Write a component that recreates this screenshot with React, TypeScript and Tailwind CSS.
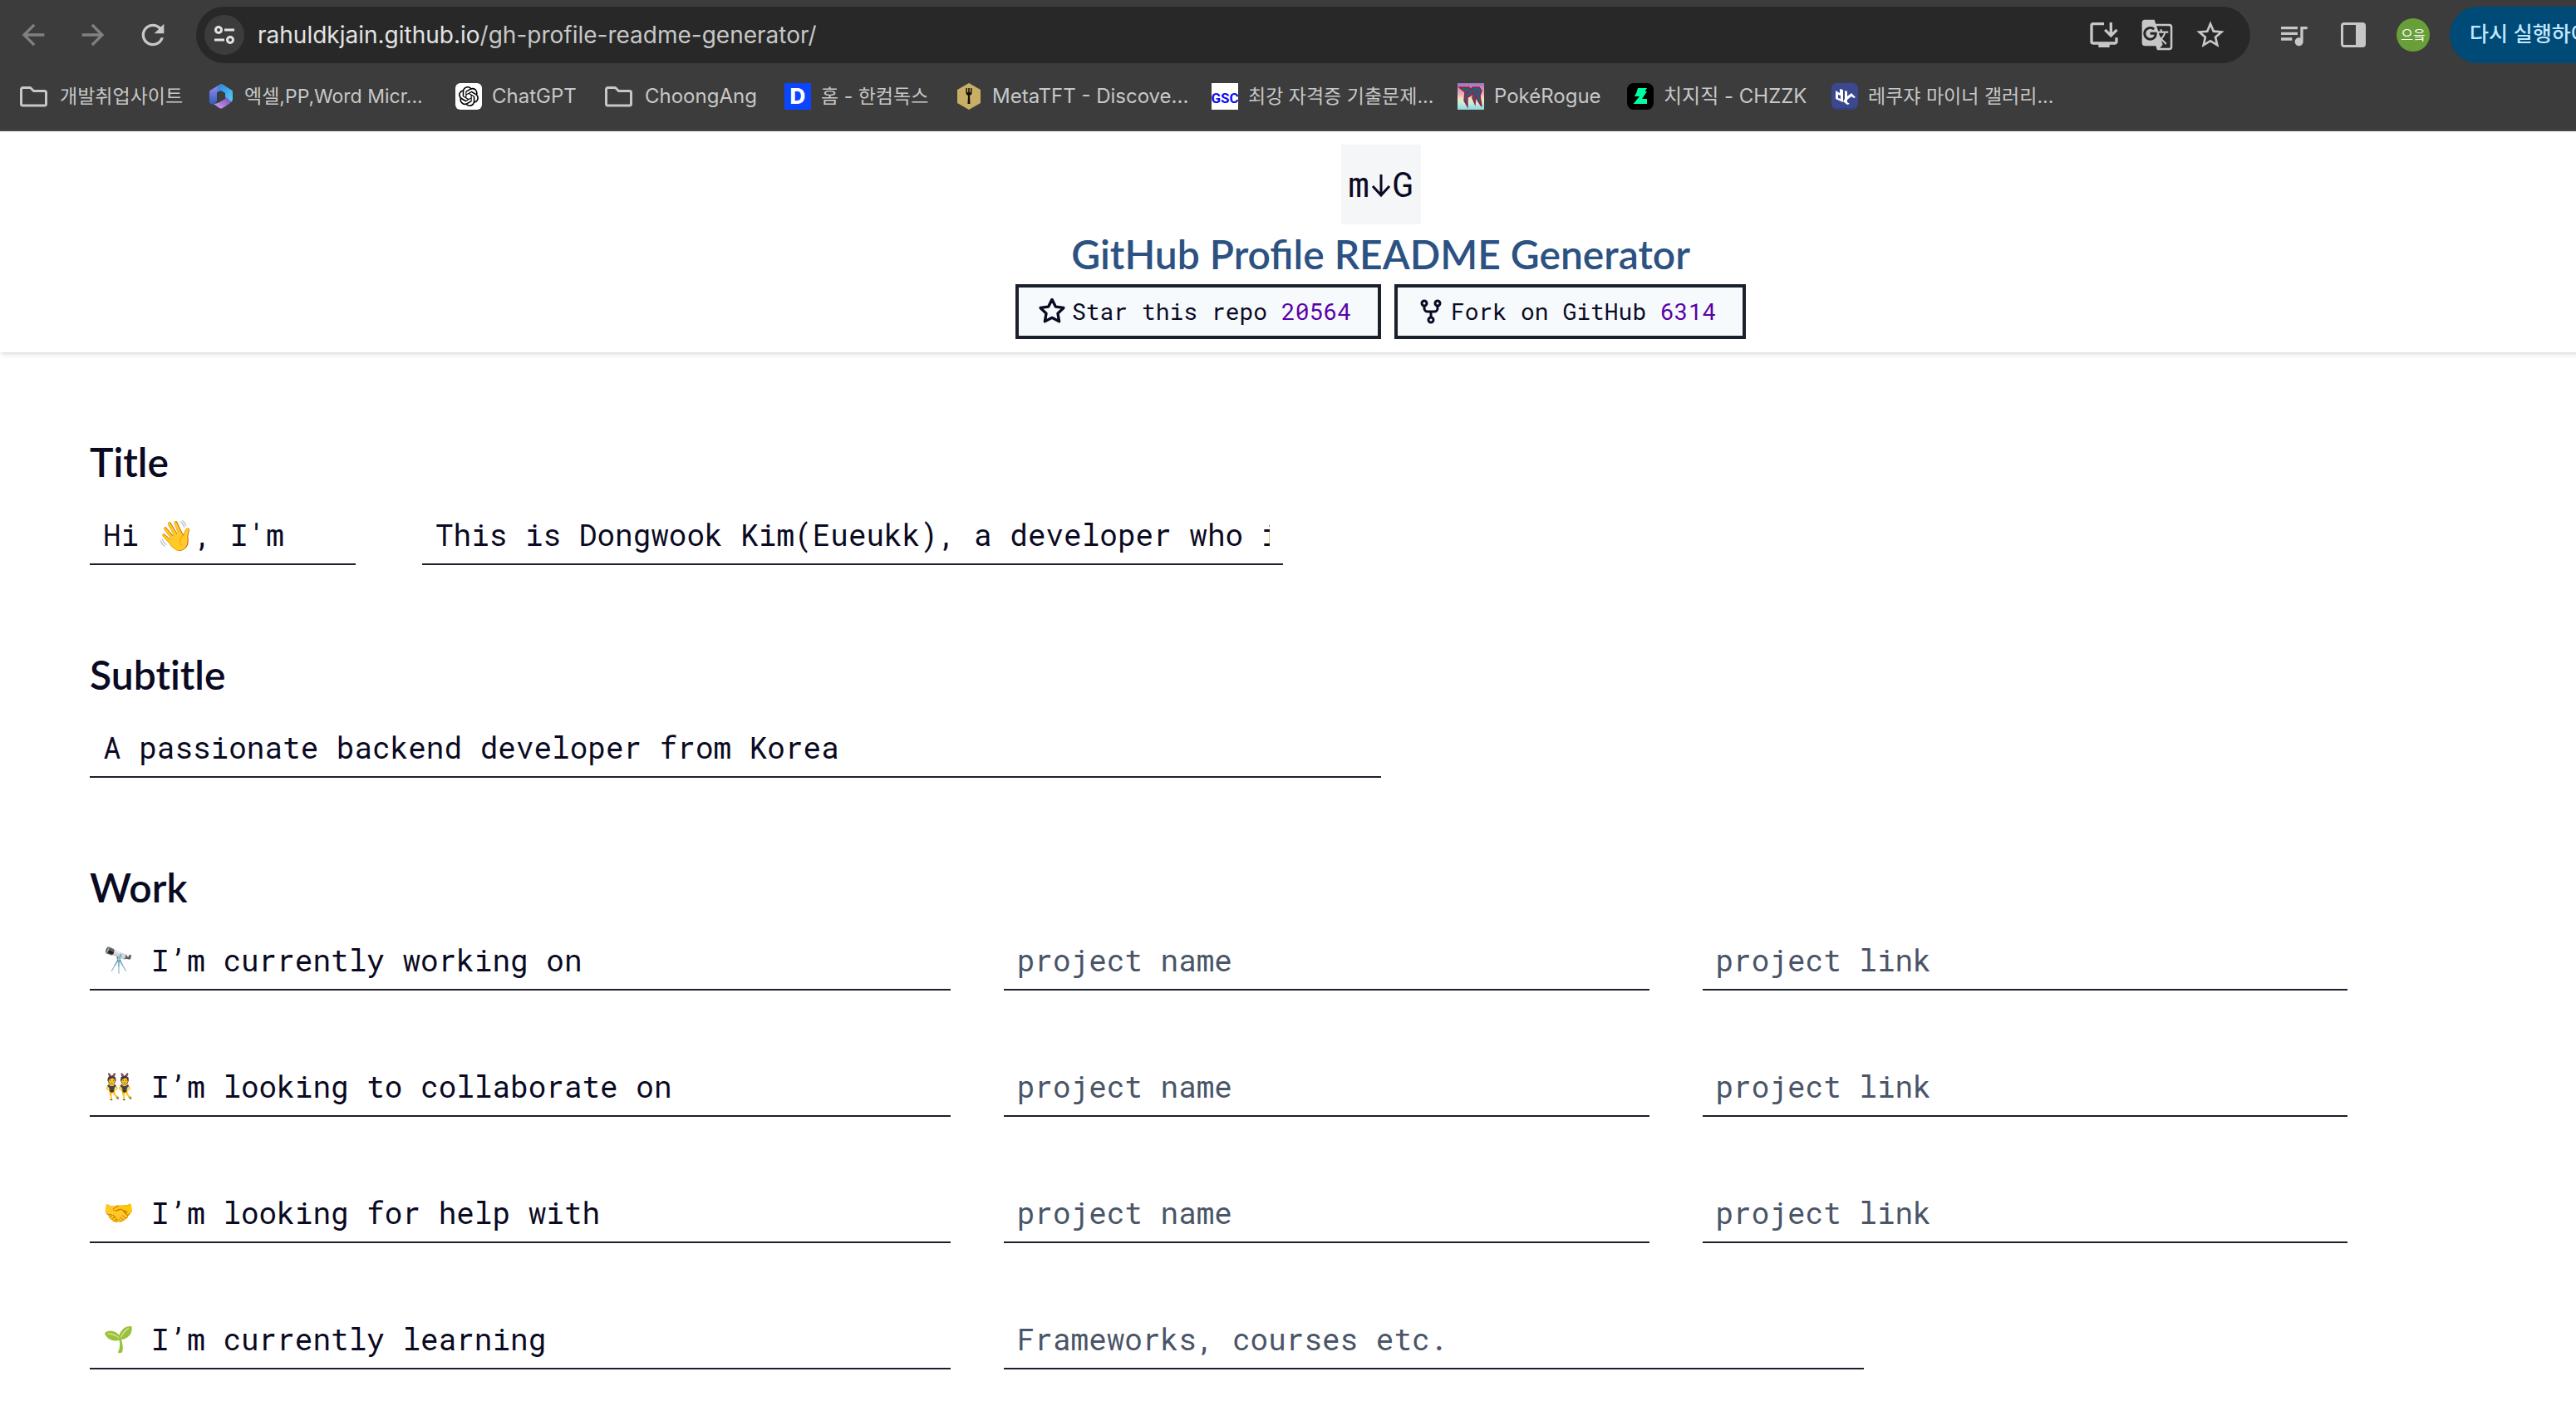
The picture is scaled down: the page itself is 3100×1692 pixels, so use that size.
import type { ReactNode } from 'react';
import {
  MdArrowBack,
  MdArrowForward,
  MdInstallDesktop,
  MdGTranslate,
  MdQueueMusic,
  MdRefresh,
  MdStarBorder,
} from 'react-icons/md';
import { SiOpenai } from 'react-icons/si';
import { GoStar } from 'react-icons/go';

const FolderIcon = () => (
  <svg viewBox="0 0 36 32" className="h-8 w-9" fill="none" stroke="#c7c7c7" strokeWidth="3" strokeLinejoin="round">
    <path d="M1.500 7.500a2 2 0 0 1 2-2h9l4 4h13a2 2 0 0 1 2 2V25a2 2 0 0 1-2 2h-26a2 2 0 0 1-2-2z" />
  </svg>
);

const OfficeIcon = () => (
  <svg viewBox="0 0 32 32" className="size-8">
    <defs>
      <linearGradient id="of-a" x1="0" y1="0" x2="0" y2="1">
        <stop offset="0" stopColor="#a78bf0" />
        <stop offset="1" stopColor="#2b5fc0" />
      </linearGradient>
      <linearGradient id="of-b" x1="0" y1="0" x2="1" y2="1">
        <stop offset="0" stopColor="#2f7fe0" />
        <stop offset="1" stopColor="#4fd0f8" />
      </linearGradient>
      <linearGradient id="of-c" x1="0" y1="1" x2="1" y2="0">
        <stop offset="0" stopColor="#d9a4f5" />
        <stop offset="1" stopColor="#6a45b8" />
      </linearGradient>
    </defs>
    <path d="M16 1 4 8a3 3 0 0 0-2 3v11c0 3 3 4 5 3l4-3V12c0-2 1-3 2-4z" fill="url(#of-a)" />
    <path d="M16 1c-4 2-5 5-5 10l5-2 5 3v8l7 3c1-1 2-2 2-4v-8a3 3 0 0 0-2-3L18 1.500z" fill="url(#of-b)" />
    <path d="M7 25c4 0 9-3 14-6v-3l7 6-1 2-9 6a4 4 0 0 1-4 0z" fill="url(#of-c)" />
  </svg>
);

const ChatIcon = () => (
  <span className="flex size-8 items-center justify-center rounded-md bg-white">
    <SiOpenai className="size-6 text-black" />
  </span>
);

const HancomIcon = () => (
  <span className="flex size-8 items-center justify-center bg-[#0a46ff] text-[26px] leading-8 font-extrabold text-white">D</span>
);

const MetaIcon = () => (
  <svg viewBox="0 0 32 32" className="size-8">
    <path d="M16 0 30 8v16l-14 8L2 24V8z" fill="#c9ae66" />
    <path d="M12.500 6v6c0 2 1.500 2.500 2.500 3l-.5 10h3l-.5-10c1-.5 2.500-1 2.500-3V6h-1.500v5h-1.200V6h-1.600v5H14V6z" fill="#15120a" />
  </svg>
);

const GscIcon = () => (
  <svg viewBox="0 0 32 32" className="size-8">
    <path d="M0 0h32v32H0z" fill="#fff" />
    <text
      x="16"
      y="24"
      textAnchor="middle"
      fontFamily="Liberation Sans Narrow, Roboto, sans-serif"
      fontWeight="700"
      fontSize="17"
      fill="#0d0df0"
    >
      GSC
    </text>
  </svg>
);

const PokeIcon = () => (
  <svg viewBox="0 0 32 32" className="size-8">
    <defs>
      <linearGradient id="pk" x1="0" y1="0" x2="0" y2="1">
        <stop offset="0" stopColor="#9a72bc" />
        <stop offset=".2" stopColor="#c493c4" />
        <stop offset=".45" stopColor="#f0b6b0" />
        <stop offset=".6" stopColor="#f5e6c0" />
        <stop offset=".75" stopColor="#bff0e4" />
        <stop offset="1" stopColor="#8fd6dc" />
      </linearGradient>
    </defs>
    <path d="M0 0h32v32H0z" fill="url(#pk)" />
    <path
      d="M2 5h12l2 3 2-3h8l3 4-2 6 2 13-4-6-3-6-1 9-3-7 1-8-3 5-4 2v11l-4-7 1-10z"
      fill="#2c5b80"
      stroke="#a01f36"
      strokeWidth="1.500"
    />
    <path d="M11 9h3l-1 4h-2zM22 9h3l-1 3h-2z" fill="#a01f36" />
  </svg>
);

const ChzzkIcon = () => (
  <svg viewBox="0 0 32 32" className="size-8">
    <rect width="32" height="32" rx="8" fill="#000" />
    <path d="M13 6h11l-2.500 4H24l-6 9h6v6H7.500l7.500-9H9l2.500-5z" fill="#00ffa3" />
  </svg>
);

const GalleryIcon = () => (
  <svg viewBox="0 0 32 32" className="size-8">
    <rect width="32" height="32" rx="6" fill="#34407f" />
    <rect width="32" height="30" rx="6" fill="#3b4890" />
    <path
      fillRule="evenodd"
      d="M5 9l5 3V7l4 1v15l-9-4zM8 14v4l3 1v-4zM16 9l3 1v6l5-4 5 5-2 1-3-2-5 4v3l3 2-3 1-5-4 2-3z"
      fill="#fff"
    />
  </svg>
);

type Bookmark = { text: string; icon: ReactNode; width: string; size: string };

const bookmarks: Bookmark[] = [
  { text: '개발취업사이트', icon: <FolderIcon />, width: 'w-[226px]', size: 'text-[23px]' },
  { text: '엑셀,PP,Word Micr...', icon: <OfficeIcon />, width: 'w-[298px]', size: 'text-[23px]' },
  { text: 'ChatGPT', icon: <ChatIcon />, width: 'w-[180px]', size: 'text-2xl' },
  { text: 'ChoongAng', icon: <FolderIcon />, width: 'w-[216px]', size: 'text-2xl' },
  { text: '홈 - 한컴독스', icon: <HancomIcon />, width: 'w-[206px]', size: 'text-[23px]' },
  { text: 'MetaTFT - Discove...', icon: <MetaIcon />, width: 'w-[308px]', size: 'text-2xl' },
  { text: '최강 자격증 기출문제...', icon: <GscIcon />, width: 'w-[296px]', size: 'text-[23px]' },
  { text: 'PokéRogue', icon: <PokeIcon />, width: 'w-[204px]', size: 'text-2xl' },
  { text: '치지직 - CHZZK', icon: <ChzzkIcon />, width: 'w-[246px]', size: 'text-2xl' },
  { text: '레쿠쟈 마이너 갤러리...', icon: <GalleryIcon />, width: 'w-[280px]', size: 'text-[23px]' },
];

function BrowserBar() {
  return (
    <div className="border-b-2 border-[#484848] bg-[#3c3c3c] font-['Inter','Noto_Sans_CJK_KR',sans-serif] text-[#c7c7c7]">
      <div className="flex h-21 items-center gap-8 overflow-hidden pl-5">
        <button aria-label="Back" className="text-[#808080]"><MdArrowBack className="size-10" /></button>
        <button aria-label="Forward" className="text-[#808080]"><MdArrowForward className="size-10" /></button>
        <button aria-label="Reload"><MdRefresh className="size-10" /></button>
        <div className="flex h-17 flex-1 items-center rounded-full bg-[#282828] pr-7 pl-[10px]">
          <button aria-label="Site information" className="flex size-12 items-center justify-center rounded-full bg-[#3c3c3c]">
            <svg viewBox="0 0 24 22" className="h-[22px] w-6" fill="none" stroke="#e3e3e3" strokeWidth="3">
              <circle cx="5" cy="5" r="3.500" />
              <path d="M12 5h12M0 17h12" />
              <circle cx="19" cy="17" r="3.500" />
            </svg>
          </button>
          <p className="flex-1 pl-4 text-[28px] leading-10 whitespace-nowrap">
            <span className="text-[#e3e3e3]">rahuldkjain.github.io</span>/gh-profile-readme-generator/
          </p>
          <div className="flex gap-6">
            <button aria-label="Install app"><MdInstallDesktop className="size-10" /></button>
            <button aria-label="Translate"><MdGTranslate className="size-10" /></button>
            <button aria-label="Bookmark"><MdStarBorder className="size-10" /></button>
          </div>
        </div>
        <button aria-label="Media"><MdQueueMusic className="size-10" /></button>
        <button aria-label="Side panel">
          <svg viewBox="0 0 40 40" className="size-10">
            <rect x="6.500" y="6.500" width="27" height="27" rx="2.500" fill="none" stroke="currentColor" strokeWidth="3" />
            <path d="M23 6h10v28H23z" fill="currentColor" />
          </svg>
        </button>
        <div className="flex gap-6">
          <button aria-label="Profile" className="my-auto size-10 rounded-full bg-[#689f38] text-base text-white">으읔</button>
          <button className="h-17 w-38 overflow-hidden rounded-l-full bg-[#004a77] pl-6 text-left text-[25px] font-medium whitespace-nowrap text-[#c2e7ff]">
            다시 실행하여 업데이트
          </button>
        </div>
      </div>
      <nav className="flex h-18 items-center overflow-hidden pb-2 pl-6">
        {bookmarks.map((b) => (
          <a key={b.text} href="#" className={`flex shrink-0 items-center gap-3 whitespace-nowrap ${b.width} ${b.size}`}>
            {b.icon}
            {b.text}
          </a>
        ))}
      </nav>
    </div>
  );
}

const ForkIcon = () => (
  <svg viewBox="0 0 32 32" className="size-8" fill="none" stroke="currentColor" strokeWidth="3">
    <circle cx="8" cy="6" r="3" />
    <circle cx="24" cy="6" r="3" />
    <circle cx="16" cy="26" r="3" />
    <path d="M8 9v3a4 4 0 0 0 4 4h8a4 4 0 0 0 4-4V9M16 16v7" />
  </svg>
);

function RepoLink({ icon, text, count }: { icon: ReactNode; text: string; count: string }) {
  return (
    <a href="#" className="flex items-center gap-2 border-4 border-[#1a202c] bg-[#f7fafc] py-2 pr-8 pl-6 text-[28px] leading-[42px]">
      {icon}
      <span>
        {text} <span className="text-[#5a01a7]">{count}</span>
      </span>
    </a>
  );
}

function SiteHeader() {
  return (
    <header className="flex flex-col items-center bg-white py-4 shadow-md">
      <div className="flex size-24 items-center justify-center bg-[#f5f6f8] pb-1 text-[42px]">
        m
        <svg viewBox="0 0 28 32" className="mt-2 h-8 w-7" fill="none" stroke="currentColor" strokeWidth="3">
          <path d="M14 2v24M4 16l10 11 10-11" />
        </svg>
        G
      </div>
      <h1 className="font-[Lato] text-5xl leading-[72px] font-semibold text-[#2c5282]">GitHub Profile README Generator</h1>
      <div className="flex gap-4">
        <RepoLink icon={<GoStar className="size-8" strokeWidth="1" />} text="Star this repo" count="20564" />
        <RepoLink icon={<ForkIcon />} text="Fork on GitHub" count="6314" />
      </div>
    </header>
  );
}

type FieldProps = { label: string; width: string; value?: string; placeholder?: string; emoji?: string };

function Field({ label, width, value, placeholder, emoji }: FieldProps) {
  return (
    <label className={`flex h-18 items-center border-b-2 border-[#1a202c] px-4 ${width}`}>
      {emoji && <span className="mr-[22px] w-9 text-[30px] leading-10">{emoji}</span>}
      <input
        aria-label={label}
        defaultValue={value}
        placeholder={placeholder}
        className="h-full w-full min-w-0 bg-transparent text-4xl outline-none placeholder:text-[#4a5568] placeholder:opacity-100"
      />
    </label>
  );
}

function Section({ title, children }: { title: string; children: ReactNode }) {
  return (
    <section>
      <h2 className="mb-4 font-[Lato] text-5xl leading-[72px] font-semibold [font-variant-ligatures:none]">{title}</h2>
      {children}
    </section>
  );
}

const projects = [
  { emoji: '🔭', text: 'I’m currently working on' },
  { emoji: '👯', text: 'I’m looking to collaborate on' },
  { emoji: '🤝', text: 'I’m looking for help with' },
];

export default function App() {
  return (
    <div className="h-screen overflow-hidden bg-white">
      <BrowserBar />
      <div className="w-[107.2%] font-['Roboto_Mono','Liberation_Mono',monospace] text-[#0a0a23]">
        <SiteHeader />
        <form className="flex flex-col gap-24 px-27 pt-24">
          <Section title="Title">
            <div className="flex gap-20">
              <Field label="Title prefix" width="w-80" value="Hi 👋, I'm" />
              <Field label="Name" width="w-1/3" value="This is Dongwook Kim(Eueukk), a developer who is passionate" />
            </div>
          </Section>
          <Section title="Subtitle">
            <Field label="Subtitle" width="w-1/2" value="A passionate backend developer from Korea" />
          </Section>
          <Section title="Work">
            <div className="flex flex-col gap-20">
              {projects.map((p) => (
                <div key={p.text} className="flex gap-16">
                  <Field label={p.text} width="w-1/3" emoji={p.emoji} value={p.text} />
                  <Field label={`${p.text}: name`} width="w-1/4" placeholder="project name" />
                  <Field label={`${p.text}: link`} width="w-1/4" placeholder="project link" />
                </div>
              ))}
              <div className="flex gap-16">
                <Field label="Learning" width="w-1/3" emoji="🌱" value="I’m currently learning" />
                <Field label="Topics" width="w-1/3" placeholder="Frameworks, courses etc." />
              </div>
            </div>
          </Section>
        </form>
      </div>
    </div>
  );
}
